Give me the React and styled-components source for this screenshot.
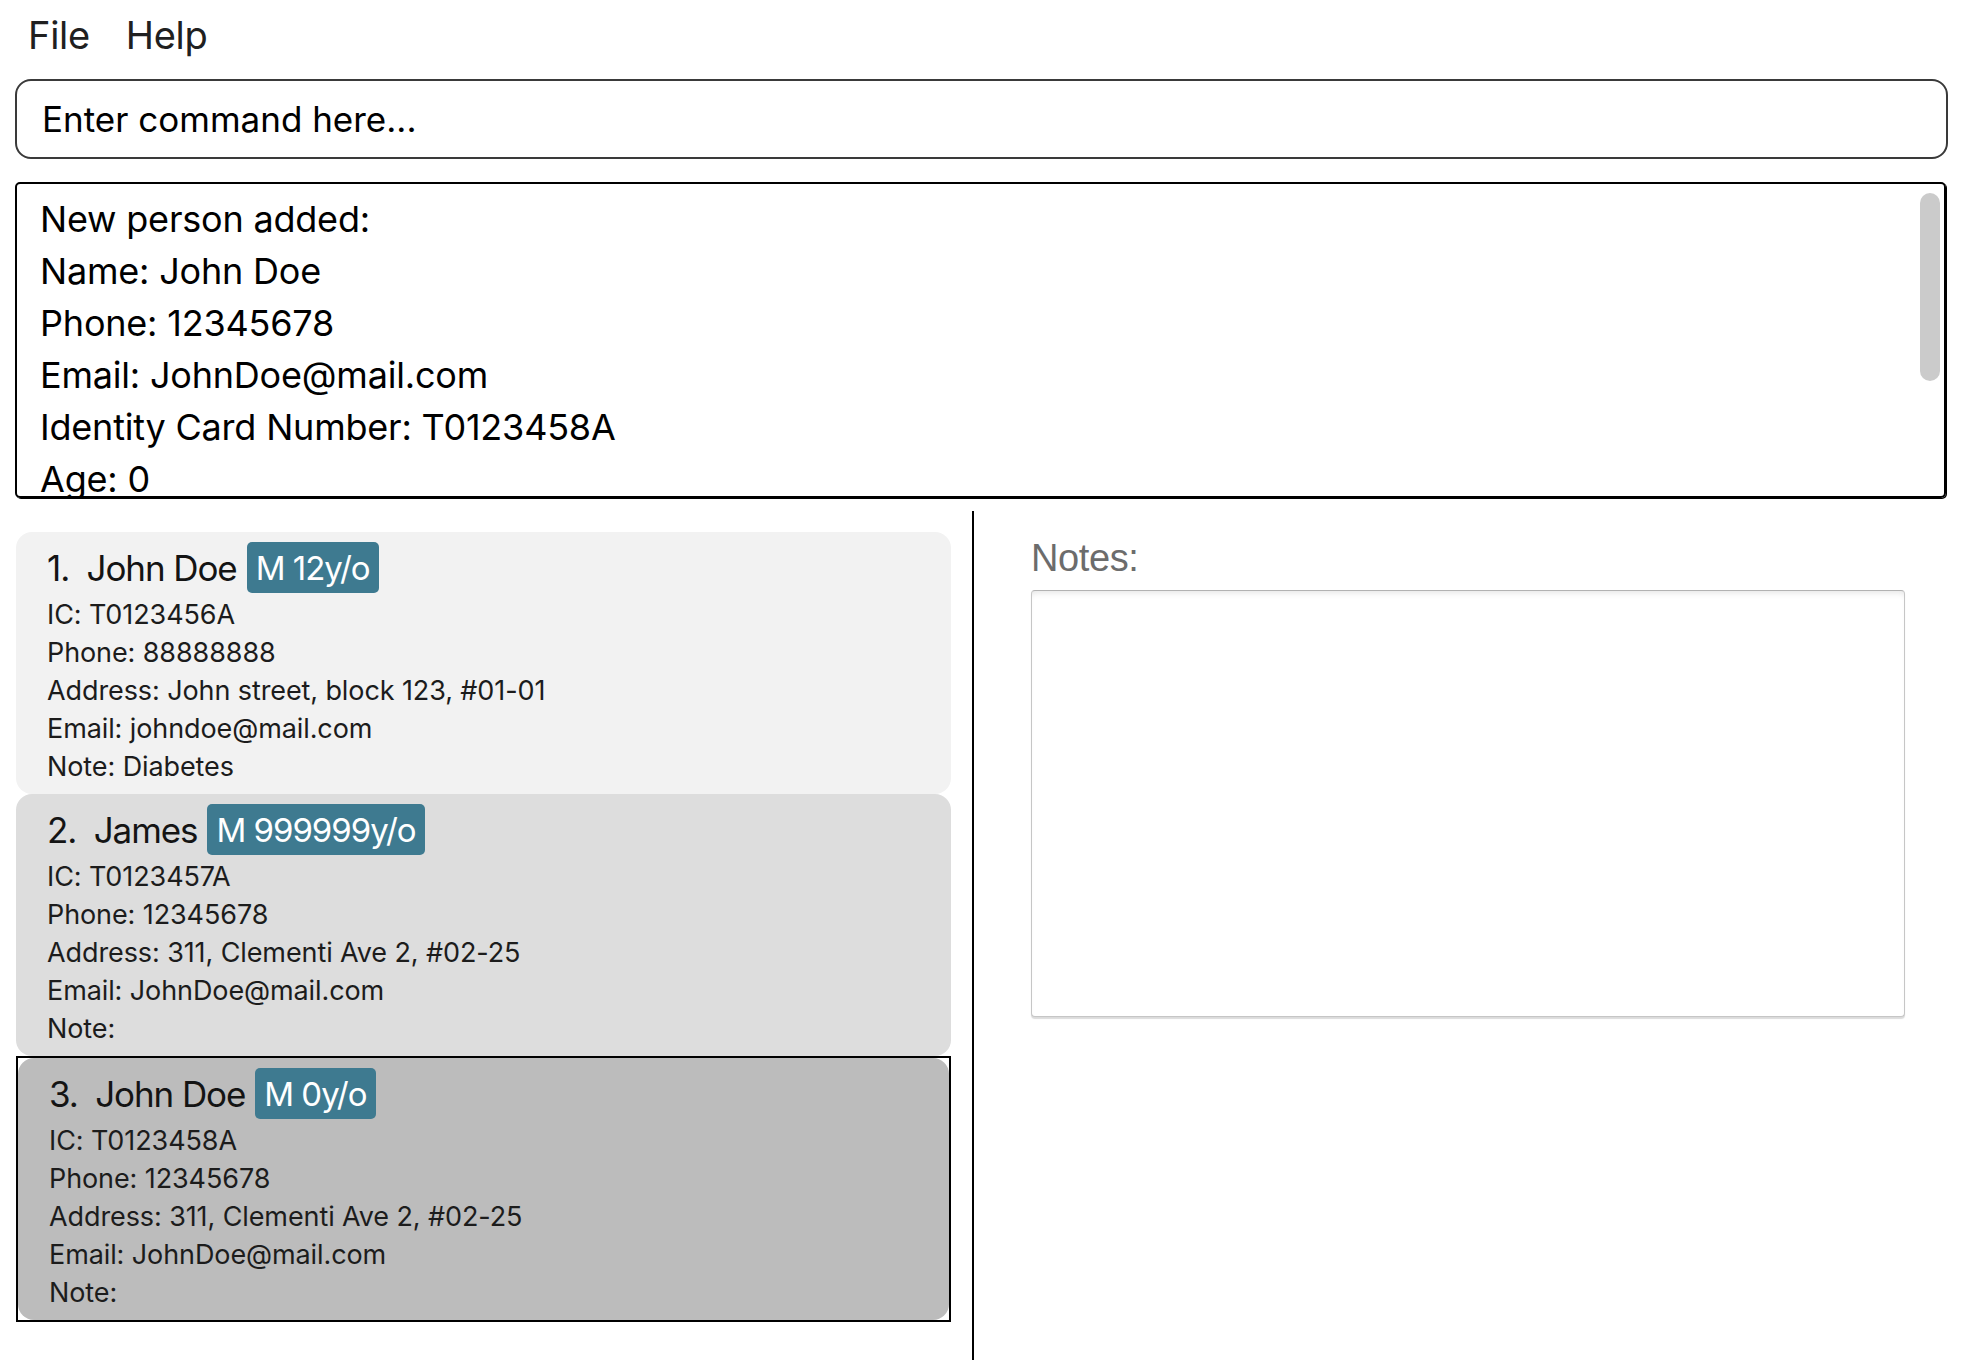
import React from 'react';
import styled, { createGlobalStyle } from 'styled-components';

const GlobalStyle = createGlobalStyle`
    html, body {
        margin: 0;
        padding: 0;
        background: #ffffff;
    }
    body {
        font-family: Inter, "Noto Sans", sans-serif;
        color: #111111;
    }
    * {
        box-sizing: border-box;
    }
`;

const Window = styled.div`
    height: 100vh;
    display: flex;
    flex-direction: column;
    overflow: hidden;
`;

const MenuBar = styled.div`
    height: 70px;
    display: flex;
    align-items: center;
    gap: 36px;
    padding-left: 28px;
`;

const MenuItem = styled.div`
    font-size: 38px;
    letter-spacing: -0.3px;
    color: #202020;
    line-height: 66px;
    cursor: default;
`;

const CommandBox = styled.div`
    margin: 9px 16px 0 15px;
    height: 80px;
    border: 2px solid #3a3a3a;
    border-radius: 16px;
    display: flex;
    align-items: center;
    padding-left: 25px;
    font-size: 35px;
    color: #000000;
`;

const ResultBox = styled.div`
    position: relative;
    margin: 23px 18px 0 15px;
    height: 316px;
    border: 2px solid #000000;
    border-radius: 5px;
    box-shadow: 1px 1px 0 #000000;
    padding: 9px 23px 0;
    overflow: hidden;
`;

const ResultLine = styled.div`
    font-size: 36px;
    letter-spacing: -0.2px;
    line-height: 52px;
    color: #000000;
    white-space: pre;
`;

const ScrollThumb = styled.div`
    position: absolute;
    top: 9px;
    right: 4px;
    width: 20px;
    height: 188px;
    border-radius: 10px;
    background: #cbcbcb;
`;

const Split = styled.div`
    flex: 1;
    margin-top: 13px;
    display: flex;
    min-height: 0;
`;

const ListPanel = styled.div`
    width: 974px;
    flex-shrink: 0;
    padding: 21px 21px 0 16px;
    display: flex;
    flex-direction: column;
    border-right: 2px solid #000000;
`;

const Cell = styled.div`
    border: ${({ selected }) => selected ? '2px solid #000000' : 'none'};
`;

const Card = styled.div`
    background: ${({ shade }) => shade};
    border-radius: 16px;
    padding: 10px 20px 8px 31px;
`;

const Header = styled.div`
    display: flex;
    align-items: center;
    gap: 10px;
    height: 51px;
`;

const Name = styled.div`
    font-size: 35px;
    letter-spacing: -1.1px;
    color: #141414;
    white-space: pre;
`;

const Badge = styled.div`
    height: 51px;
    display: flex;
    align-items: center;
    padding: 0 9px;
    border-radius: 5px;
    background: #3e7a90;
    color: #ffffff;
    font-size: 33px;
    letter-spacing: -1px;
`;

const Details = styled.div`
    margin-top: 3px;
`;

const Detail = styled.div`
    font-size: 27px;
    letter-spacing: -0.1px;
    line-height: 38px;
    color: #1c1c1c;
`;

const NotesPanel = styled.div`
    flex: 1;
    padding: 26px 59px 0 57px;
`;

const NotesLabel = styled.div`
    font-family: "Liberation Sans", Arial, sans-serif;
    font-size: 38px;
    letter-spacing: -0.4px;
    color: #6c6c6c;
`;

const NotesArea = styled.div`
    margin-top: 10px;
    height: 427px;
    border: 1px solid #c6c6c6;
    border-top-color: #b2b2b2;
    border-radius: 4px;
    background: #ffffff;
    box-shadow: inset 0 6px 6px -4px rgba(0, 0, 0, 0.1), 0 2px 1px rgba(0, 0, 0, 0.14);
`;

const resultLines = [
    'New person added:',
    'Name: John Doe',
    'Phone: 12345678',
    'Email: JohnDoe@mail.com',
    'Identity Card Number: T0123458A',
    'Age: 0',
    'Gender: M',
    'Address: 311, Clementi Ave 2, #02-25',
];

const persons = [
    {
        name: 'John Doe', badge: 'M 12y/o', ic: 'T0123456A', phone: '88888888',
        address: 'John street, block 123, #01-01', email: 'johndoe@mail.com', note: 'Diabetes',
        shade: '#f2f2f2',
    },
    {
        name: 'James', badge: 'M 999999y/o', ic: 'T0123457A', phone: '12345678',
        address: '311, Clementi Ave 2, #02-25', email: 'JohnDoe@mail.com', note: '',
        shade: '#dddddd',
    },
    {
        name: 'John Doe', badge: 'M 0y/o', ic: 'T0123458A', phone: '12345678',
        address: '311, Clementi Ave 2, #02-25', email: 'JohnDoe@mail.com', note: '',
        shade: '#bcbcbc', selected: true,
    },
];

const PersonCard = ({ index, person }) => (
    <Cell selected={person.selected}>
        <Card shade={person.shade}>
            <Header>
                <Name>{`${index}.  ${person.name}`}</Name>
                <Badge>{person.badge}</Badge>
            </Header>
            <Details>
                <Detail>IC: {person.ic}</Detail>
                <Detail>Phone: {person.phone}</Detail>
                <Detail>Address: {person.address}</Detail>
                <Detail>Email: {person.email}</Detail>
                <Detail>Note: {person.note}</Detail>
            </Details>
        </Card>
    </Cell>
);

export default function App() {
    return (
        <>
            <GlobalStyle />
            <Window>
                <MenuBar>
                    <MenuItem>File</MenuItem>
                    <MenuItem>Help</MenuItem>
                </MenuBar>
                <CommandBox>Enter command here...</CommandBox>
                <ResultBox>
                    {resultLines.map(line => <ResultLine key={line}>{line}</ResultLine>)}
                    <ScrollThumb />
                </ResultBox>
                <Split>
                    <ListPanel>
                        {persons.map((p, i) => <PersonCard key={i} index={i + 1} person={p} />)}
                    </ListPanel>
                    <NotesPanel>
                        <NotesLabel>Notes:</NotesLabel>
                        <NotesArea />
                    </NotesPanel>
                </Split>
            </Window>
        </>
    );
}
